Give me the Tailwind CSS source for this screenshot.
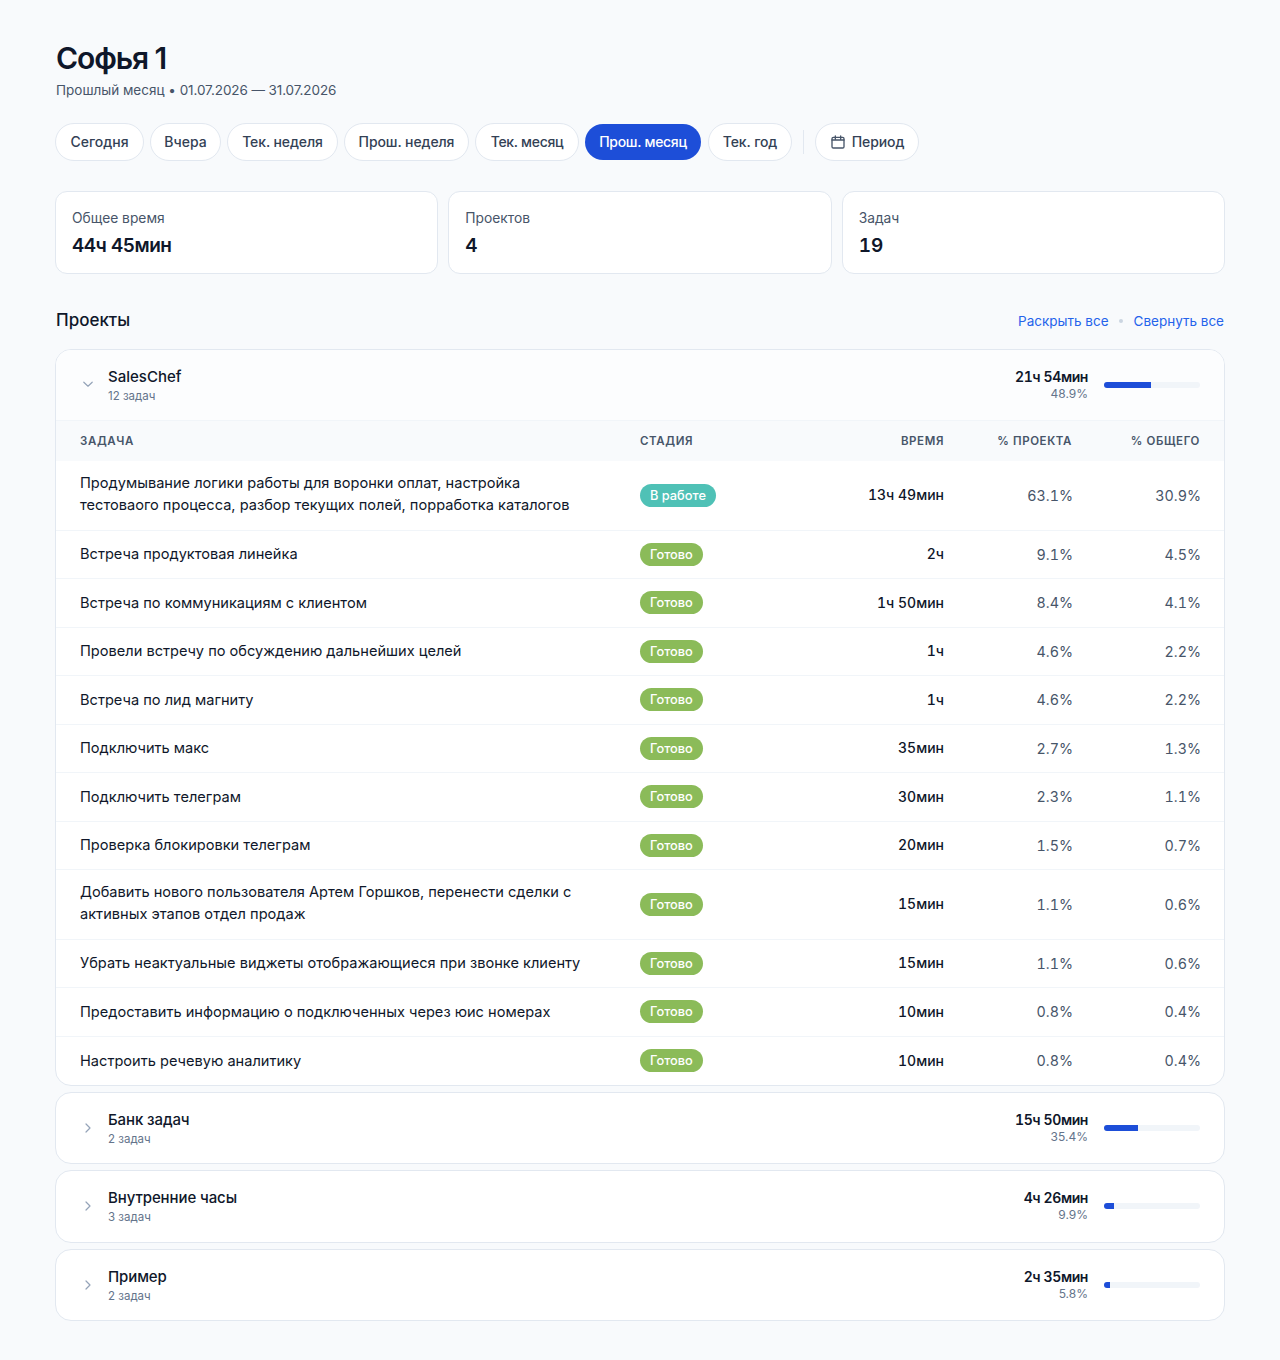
<!DOCTYPE html>
<html lang="ru">
<head>
    <meta charset="UTF-8">
    <meta name="viewport" content="width=device-width, initial-scale=1.0">
    <title>Софья 1</title>
    <script src="https://cdn.jsdelivr.net/npm/@tailwindcss/browser@4"></script>
</head>
<body class="bg-[#f8fafc] font-['Inter',sans-serif] text-[#0f172a] min-h-screen">

  <div class="w-[1170px] mx-auto pt-10 pb-[38px]">

    <!-- заголовок -->
    <h1 class="text-3xl font-semibold tracking-[-1.1px] pl-px leading-9">Софья 1</h1>
    <p class="mt-1 pl-px text-[13.5px] leading-5 text-[#475569]">Прошлый месяц <span>•</span> <span class="tracking-[-0.1px]">01.07.2026 — 31.07.2026</span></p>

    <!-- периоды -->
    <div class="mt-[23px] flex items-center gap-1.5 text-sm font-medium text-[#334155]">
      <button class="w-[89px] h-[38px] rounded-full bg-white border border-[#e2e8f0]">Сегодня</button>
      <button class="w-[71px] h-[38px] rounded-full bg-white border border-[#e2e8f0]">Вчера</button>
      <button class="w-[111px] h-[38px] rounded-full bg-white border border-[#e2e8f0] tracking-[-0.1px]">Тек. неделя</button>
      <button class="w-[125px] h-[38px] rounded-full bg-white border border-[#e2e8f0] tracking-[-0.1px]">Прош. неделя</button>
      <button class="w-[104px] h-[38px] rounded-full bg-white border border-[#e2e8f0] tracking-[-0.3px]">Тек. месяц</button>
      <button class="w-[116px] h-9 mr-px rounded-full bg-[#1d4ed8] text-white tracking-[-0.3px]">Прош. месяц</button>
      <button class="w-[84px] h-[38px] rounded-full bg-white border border-[#e2e8f0] tracking-[-0.1px]">Тек. год</button>
      <span class="w-px h-6 bg-[#e2e8f0] mx-[5px]"></span>
      <button class="w-[104px] h-[38px] rounded-full bg-white border border-[#e2e8f0] flex items-center justify-center gap-1.5 tracking-[-0.1px]">
        <svg class="w-4 h-4 text-[#475569]" viewBox="0 0 24 24" fill="none" stroke="currentColor" stroke-width="2" stroke-linecap="round" stroke-linejoin="round"><rect x="3" y="5" width="18" height="16" rx="2"/><path d="M16 3v4M8 3v4M3 9h18"/></svg>
        Период
      </button>
    </div>

    <!-- итоги -->
    <div class="mt-[30px] grid grid-cols-3 gap-2.5">
      <div class="h-[83px] bg-white border border-[#e2e8f0] rounded-xl px-4 pt-4">
        <div class="text-[13.8px] leading-5 text-[#475569]">Общее время</div>
        <div class="mt-1 text-[19px] leading-7 font-semibold tabular-nums tracking-[-0.5px]">44ч 45мин</div>
      </div>
      <div class="h-[83px] bg-white border border-[#e2e8f0] rounded-xl px-4 pt-4">
        <div class="text-[13.8px] leading-5 text-[#475569]">Проектов</div>
        <div class="mt-1 text-[19px] leading-7 font-semibold tabular-nums">4</div>
      </div>
      <div class="h-[83px] bg-white border border-[#e2e8f0] rounded-xl px-4 pt-4">
        <div class="text-[13.8px] leading-5 text-[#475569]">Задач</div>
        <div class="mt-1 text-[19px] leading-7 font-semibold tabular-nums">19</div>
      </div>
    </div>

    <!-- проекты -->
    <div class="mt-[33px] flex items-center justify-between pl-px pr-px h-7">
      <h2 class="text-[17px] font-medium">Проекты</h2>
      <div class="flex items-center gap-[10.5px] text-[13.5px] text-[#2563eb]">
        <span>Раскрыть все</span>
        <span class="w-1 h-1 rounded-full bg-[#cbd5e1]"></span>
        <span>Свернуть все</span>
      </div>
    </div>

    <div class="mt-[14px] flex flex-col gap-1.5">

      <!-- SalesChef -->
      <div class="bg-white border border-[#e2e8f0] rounded-2xl overflow-hidden">
        <div class="h-[71px] px-6 flex items-center gap-3 border-b border-[#f1f5f9] bg-[#fcfdfe]">
          <svg class="w-4 h-4 text-[#94a3b8]" viewBox="0 0 16 16" fill="none" stroke="currentColor" stroke-width="1.2" stroke-linecap="round" stroke-linejoin="round"><path d="M3.8 5.2L8 9.2l4.2-4"/></svg>
          <div class="flex-1">
            <div class="text-[15px] leading-[22px] font-medium">SalesChef</div>
            <div class="text-[11.5px] leading-4 text-[#64748b]">12 задач</div>
          </div>
          <div class="text-right mr-1">
            <div class="text-sm leading-[18px] font-semibold tabular-nums tracking-[-0.4px]">21ч 54мин</div>
            <div class="text-xs leading-4 text-[#64748b]">48.9%</div>
          </div>
          <div class="w-24 h-1.5 rounded-full bg-[#f1f5f9] overflow-hidden"><div class="h-full bg-[#1d4ed8]" style="width:48.9%"></div></div>
        </div>

        <div class="h-10 pt-px px-6 bg-[#f8fafc] grid grid-cols-[560px_176px_128px_128px_128px] items-center text-[11.5px] font-semibold tracking-[0.6px] text-[#475569]">
          <div>ЗАДАЧА</div><div>СТАДИЯ</div><div class="text-right">ВРЕМЯ</div><div class="text-right">% ПРОЕКТА</div><div class="text-right">% ОБЩЕГО</div>
        </div>

        <div class="h-[69.5px] px-6 border-b border-[#f1f5f9] grid grid-cols-[560px_176px_128px_128px_128px] items-center text-[14.6px]">
          <div class="w-[510px] leading-[22px] pb-0.5">Продумывание логики работы для воронки оплат, настройка тестоваого процесса, разбор текущих полей, порработка каталогов</div>
          <div><span class="inline-block h-[23px] leading-[23px] px-2.5 rounded-full bg-[#4fc1b6] text-white text-[12.8px] font-medium">В работе</span></div>
          <div class="text-right text-sm font-medium tabular-nums">13ч 49мин</div><div class="-mr-px text-right text-[14.3px] text-[#475569] tabular-nums">63.1%</div><div class="-mr-px text-right text-[14.3px] text-[#475569] tabular-nums">30.9%</div>
        </div>
        <div class="h-[48.5px] px-6 border-b border-[#f1f5f9] grid grid-cols-[560px_176px_128px_128px_128px] items-center text-[14.6px]">
          <div class="w-[510px] pt-0.5">Встреча продуктовая линейка</div>
          <div><span class="inline-block h-[23px] leading-[23px] px-2.5 rounded-full bg-[#8bbb59] text-white text-[12.8px] font-medium">Готово</span></div>
          <div class="text-right text-sm font-medium tabular-nums">2ч</div><div class="-mr-px text-right text-[14.3px] text-[#475569] tabular-nums">9.1%</div><div class="-mr-px text-right text-[14.3px] text-[#475569] tabular-nums">4.5%</div>
        </div>
        <div class="h-[48.5px] px-6 border-b border-[#f1f5f9] grid grid-cols-[560px_176px_128px_128px_128px] items-center text-[14.6px]">
          <div class="w-[510px] pt-0.5">Встреча по коммуникациям с клиентом</div>
          <div><span class="inline-block h-[23px] leading-[23px] px-2.5 rounded-full bg-[#8bbb59] text-white text-[12.8px] font-medium">Готово</span></div>
          <div class="text-right text-sm font-medium tabular-nums">1ч 50мин</div><div class="-mr-px text-right text-[14.3px] text-[#475569] tabular-nums">8.4%</div><div class="-mr-px text-right text-[14.3px] text-[#475569] tabular-nums">4.1%</div>
        </div>
        <div class="h-[48.5px] px-6 border-b border-[#f1f5f9] grid grid-cols-[560px_176px_128px_128px_128px] items-center text-[14.6px]">
          <div class="w-[510px] pt-0.5">Провели встречу по обсуждению дальнейших целей</div>
          <div><span class="inline-block h-[23px] leading-[23px] px-2.5 rounded-full bg-[#8bbb59] text-white text-[12.8px] font-medium">Готово</span></div>
          <div class="text-right text-sm font-medium tabular-nums">1ч</div><div class="-mr-px text-right text-[14.3px] text-[#475569] tabular-nums">4.6%</div><div class="-mr-px text-right text-[14.3px] text-[#475569] tabular-nums">2.2%</div>
        </div>
        <div class="h-[48.5px] px-6 border-b border-[#f1f5f9] grid grid-cols-[560px_176px_128px_128px_128px] items-center text-[14.6px]">
          <div class="w-[510px] pt-0.5">Встреча по лид магниту</div>
          <div><span class="inline-block h-[23px] leading-[23px] px-2.5 rounded-full bg-[#8bbb59] text-white text-[12.8px] font-medium">Готово</span></div>
          <div class="text-right text-sm font-medium tabular-nums">1ч</div><div class="-mr-px text-right text-[14.3px] text-[#475569] tabular-nums">4.6%</div><div class="-mr-px text-right text-[14.3px] text-[#475569] tabular-nums">2.2%</div>
        </div>
        <div class="h-[48.5px] px-6 border-b border-[#f1f5f9] grid grid-cols-[560px_176px_128px_128px_128px] items-center text-[14.6px]">
          <div class="w-[510px] pt-0.5">Подключить макс</div>
          <div><span class="inline-block h-[23px] leading-[23px] px-2.5 rounded-full bg-[#8bbb59] text-white text-[12.8px] font-medium">Готово</span></div>
          <div class="text-right text-sm font-medium tabular-nums">35мин</div><div class="-mr-px text-right text-[14.3px] text-[#475569] tabular-nums">2.7%</div><div class="-mr-px text-right text-[14.3px] text-[#475569] tabular-nums">1.3%</div>
        </div>
        <div class="h-[48.5px] px-6 border-b border-[#f1f5f9] grid grid-cols-[560px_176px_128px_128px_128px] items-center text-[14.6px]">
          <div class="w-[510px] pt-0.5">Подключить телеграм</div>
          <div><span class="inline-block h-[23px] leading-[23px] px-2.5 rounded-full bg-[#8bbb59] text-white text-[12.8px] font-medium">Готово</span></div>
          <div class="text-right text-sm font-medium tabular-nums">30мин</div><div class="-mr-px text-right text-[14.3px] text-[#475569] tabular-nums">2.3%</div><div class="-mr-px text-right text-[14.3px] text-[#475569] tabular-nums">1.1%</div>
        </div>
        <div class="h-[48.5px] px-6 border-b border-[#f1f5f9] grid grid-cols-[560px_176px_128px_128px_128px] items-center text-[14.6px]">
          <div class="w-[510px] pt-0.5">Проверка блокировки телеграм</div>
          <div><span class="inline-block h-[23px] leading-[23px] px-2.5 rounded-full bg-[#8bbb59] text-white text-[12.8px] font-medium">Готово</span></div>
          <div class="text-right text-sm font-medium tabular-nums">20мин</div><div class="-mr-px text-right text-[14.3px] text-[#475569] tabular-nums">1.5%</div><div class="-mr-px text-right text-[14.3px] text-[#475569] tabular-nums">0.7%</div>
        </div>
        <div class="h-[69.5px] px-6 border-b border-[#f1f5f9] grid grid-cols-[560px_176px_128px_128px_128px] items-center text-[14.6px]">
          <div class="w-[510px] leading-[22px] pb-0.5">Добавить нового пользователя Артем Горшков, перенести сделки с активных этапов отдел продаж</div>
          <div><span class="inline-block h-[23px] leading-[23px] px-2.5 rounded-full bg-[#8bbb59] text-white text-[12.8px] font-medium">Готово</span></div>
          <div class="text-right text-sm font-medium tabular-nums">15мин</div><div class="-mr-px text-right text-[14.3px] text-[#475569] tabular-nums">1.1%</div><div class="-mr-px text-right text-[14.3px] text-[#475569] tabular-nums">0.6%</div>
        </div>
        <div class="h-[48.5px] px-6 border-b border-[#f1f5f9] grid grid-cols-[560px_176px_128px_128px_128px] items-center text-[14.6px]">
          <div class="w-[510px] pt-0.5">Убрать неактуальные виджеты отображающиеся при звонке клиенту</div>
          <div><span class="inline-block h-[23px] leading-[23px] px-2.5 rounded-full bg-[#8bbb59] text-white text-[12.8px] font-medium">Готово</span></div>
          <div class="text-right text-sm font-medium tabular-nums">15мин</div><div class="-mr-px text-right text-[14.3px] text-[#475569] tabular-nums">1.1%</div><div class="-mr-px text-right text-[14.3px] text-[#475569] tabular-nums">0.6%</div>
        </div>
        <div class="h-[48.5px] px-6 border-b border-[#f1f5f9] grid grid-cols-[560px_176px_128px_128px_128px] items-center text-[14.6px]">
          <div class="w-[510px] pt-0.5">Предоставить информацию о подключенных через юис номерах</div>
          <div><span class="inline-block h-[23px] leading-[23px] px-2.5 rounded-full bg-[#8bbb59] text-white text-[12.8px] font-medium">Готово</span></div>
          <div class="text-right text-sm font-medium tabular-nums">10мин</div><div class="-mr-px text-right text-[14.3px] text-[#475569] tabular-nums">0.8%</div><div class="-mr-px text-right text-[14.3px] text-[#475569] tabular-nums">0.4%</div>
        </div>
        <div class="h-[48px] px-6 grid grid-cols-[560px_176px_128px_128px_128px] items-center text-[14.6px]">
          <div class="w-[510px] pt-0.5">Настроить речевую аналитику</div>
          <div><span class="inline-block h-[23px] leading-[23px] px-2.5 rounded-full bg-[#8bbb59] text-white text-[12.8px] font-medium">Готово</span></div>
          <div class="text-right text-sm font-medium tabular-nums">10мин</div><div class="-mr-px text-right text-[14.3px] text-[#475569] tabular-nums">0.8%</div><div class="-mr-px text-right text-[14.3px] text-[#475569] tabular-nums">0.4%</div>
        </div>
      </div>

      <!-- Банк задач -->
      <div class="bg-white border border-[#e2e8f0] rounded-2xl h-[72.5px] px-6 flex items-center gap-3">
        <svg class="w-4 h-4 text-[#94a3b8]" viewBox="0 0 16 16" fill="none" stroke="currentColor" stroke-width="1.2" stroke-linecap="round" stroke-linejoin="round"><path d="M6 4l4 4-4 4"/></svg>
        <div class="flex-1">
          <div class="text-[15px] leading-[22px] tracking-[-0.1px] font-medium">Банк задач</div>
          <div class="text-[11.5px] leading-4 text-[#64748b]">2 задач</div>
        </div>
        <div class="text-right mr-1">
          <div class="text-sm leading-[18px] font-semibold tabular-nums tracking-[-0.4px]">15ч 50мин</div>
          <div class="text-xs leading-4 text-[#64748b]">35.4%</div>
        </div>
        <div class="w-24 h-1.5 rounded-full bg-[#f1f5f9] overflow-hidden"><div class="h-full bg-[#1d4ed8]" style="width:35.4%"></div></div>
      </div>

      <!-- Внутренние часы -->
      <div class="bg-white border border-[#e2e8f0] rounded-2xl h-[72.5px] px-6 flex items-center gap-3">
        <svg class="w-4 h-4 text-[#94a3b8]" viewBox="0 0 16 16" fill="none" stroke="currentColor" stroke-width="1.2" stroke-linecap="round" stroke-linejoin="round"><path d="M6 4l4 4-4 4"/></svg>
        <div class="flex-1">
          <div class="text-[15px] leading-[22px] tracking-[-0.1px] font-medium">Внутренние часы</div>
          <div class="text-[11.5px] leading-4 text-[#64748b]">3 задач</div>
        </div>
        <div class="text-right mr-1">
          <div class="text-sm leading-[18px] font-semibold tabular-nums tracking-[-0.4px]">4ч 26мин</div>
          <div class="text-xs leading-4 text-[#64748b]">9.9%</div>
        </div>
        <div class="w-24 h-1.5 rounded-full bg-[#f1f5f9] overflow-hidden"><div class="h-full bg-[#1d4ed8]" style="width:9.9%"></div></div>
      </div>

      <!-- Пример -->
      <div class="bg-white border border-[#e2e8f0] rounded-2xl h-[72.5px] px-6 flex items-center gap-3">
        <svg class="w-4 h-4 text-[#94a3b8]" viewBox="0 0 16 16" fill="none" stroke="currentColor" stroke-width="1.2" stroke-linecap="round" stroke-linejoin="round"><path d="M6 4l4 4-4 4"/></svg>
        <div class="flex-1">
          <div class="text-[15px] leading-[22px] tracking-[-0.1px] font-medium">Пример</div>
          <div class="text-[11.5px] leading-4 text-[#64748b]">2 задач</div>
        </div>
        <div class="text-right mr-1">
          <div class="text-sm leading-[18px] font-semibold tabular-nums tracking-[-0.4px]">2ч 35мин</div>
          <div class="text-xs leading-4 text-[#64748b]">5.8%</div>
        </div>
        <div class="w-24 h-1.5 rounded-full bg-[#f1f5f9] overflow-hidden"><div class="h-full bg-[#1d4ed8]" style="width:5.8%"></div></div>
      </div>

    </div>
  </div>

</body>
</html>
